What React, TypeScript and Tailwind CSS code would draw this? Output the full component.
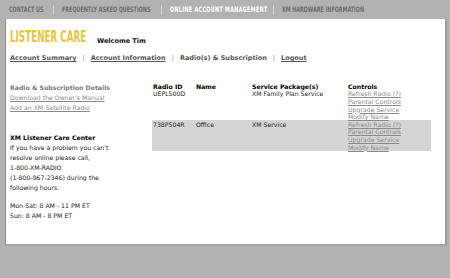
import React from "react";

const navItems = [
  { label: "CONTACT US", active: false, w: "w-[36px]" },
  { label: "FREQUENTLY ASKED QUESTIONS", active: false, w: "w-[91px]" },
  { label: "ONLINE ACCOUNT MANAGEMENT", active: true, w: "w-[95px]" },
  { label: "XM HARDWARE INFORMATION", active: false, w: "w-[81px]" },
];

const radios = [
  { id: "UEPL500D", name: "", pkg: "XM Family Plan Service", shaded: false },
  { id: "738P504R", name: "Office", pkg: "XM Service", shaded: true },
];

export default function App() {
  return (
    <div className="w-[450px] h-[278px] bg-[#b2b2b2] overflow-hidden font-['DejaVu_Sans','Verdana',sans-serif]">
      {/* top nav */}
      <div className="h-[19px] flex items-center pl-[9px] font-['DejaVu_Sans_Condensed',sans-serif] font-bold text-[7.5px] whitespace-nowrap">
        {navItems.map((n, i) => (
          <React.Fragment key={n.label}>
            {i > 0 && <span className="mx-[8px] w-px h-[10px] bg-[#cfcfcf]" />}
            <span className={`${n.w} shrink-0`}>
              <span
                className={`inline-block origin-left scale-x-[0.72] ${
                  n.active ? "text-white tracking-[0.45px]" : "text-[#6d6d6d]"
                }`}
              >
                {n.label}
              </span>
            </span>
          </React.Fragment>
        ))}
      </div>

      {/* main panel */}
      <div className="ml-[5px] mr-[3px] h-[227px] bg-white border-l border-l-[#8e8e8e] border-r-2 border-r-[#9c9c9c] border-b-2 border-b-[#a4a4a4] pl-[4px]">
        <div className="flex items-end pt-[15px] h-[30px]">
          <span className="w-[77px] shrink-0 whitespace-nowrap">
            <span className="inline-block origin-left scale-x-[0.65] font-['DejaVu_Sans_Condensed',sans-serif] font-bold text-[15px] leading-[15px] text-[#e6c53e]">
              LISTENER CARE
            </span>
          </span>
          <span className="ml-[10px] mb-[2px] text-[6.5px] font-bold text-[#111]">Welcome Tim</span>
        </div>

        <div className="flex items-center mt-[5px] text-[6.5px] font-bold text-[#555] whitespace-nowrap">
          <span className="underline">Account Summary</span>
          <span className="mx-[6px] font-normal text-[#888]">|</span>
          <span className="underline">Account Information</span>
          <span className="mx-[6px] font-normal text-[#888]">|</span>
          <span>Radio(s) &amp; Subscription</span>
          <span className="mx-[6px] font-normal text-[#888]">|</span>
          <span className="underline">Logout</span>
        </div>

        <div className="flex mt-[19px]">
          {/* left column */}
          <div className="w-[142px] text-[6.2px] leading-[10px] text-[#222]">
            <div className="font-bold text-[#7a7a7a]">Radio &amp; Subscription Details</div>
            <div className="underline text-[#8a8a8a]">Download the Owner's Manual</div>
            <div className="underline text-[#8a8a8a]">Add an XM Satellite Radio</div>
            <div className="mt-[20px] font-bold text-black">XM Listener Care Center</div>
            <div>If you have a problem you can't</div>
            <div>resolve online please call,</div>
            <div>1-800-XM-RADIO</div>
            <div>(1-800-967-2346) during the</div>
            <div>following hours:</div>
            <div className="mt-[8px]">Mon-Sat: 8 AM - 11 PM ET</div>
            <div>Sun: 8 AM - 8 PM ET</div>
          </div>

          {/* radio table */}
          <div className="w-[279px] text-[6.2px] leading-[7.6px] text-[#222]">
            <div className="flex font-bold text-black">
              <div className="w-[44px] pl-[1px]">Radio ID</div>
              <div className="w-[56px]">Name</div>
              <div className="w-[96px]">Service Package(s)</div>
              <div>Controls</div>
            </div>
            {radios.map((r) => (
              <div key={r.id} className={`flex ${r.shaded ? "bg-[#d5d5d5] mt-[-1px] pt-[1px]" : ""}`}>
                <div className="w-[44px] pl-[1px]">{r.id}</div>
                <div className="w-[56px]">{r.name}</div>
                <div className="w-[96px]">{r.pkg}</div>
                <div className="flex flex-col text-[#8a8a8a] underline">
                  <span>Refresh Radio (?)</span>
                  <span>Parental Controls</span>
                  <span>Upgrade Service</span>
                  <span>Modify Name</span>
                </div>
              </div>
            ))}
          </div>
        </div>
      </div>
    </div>
  );
}
